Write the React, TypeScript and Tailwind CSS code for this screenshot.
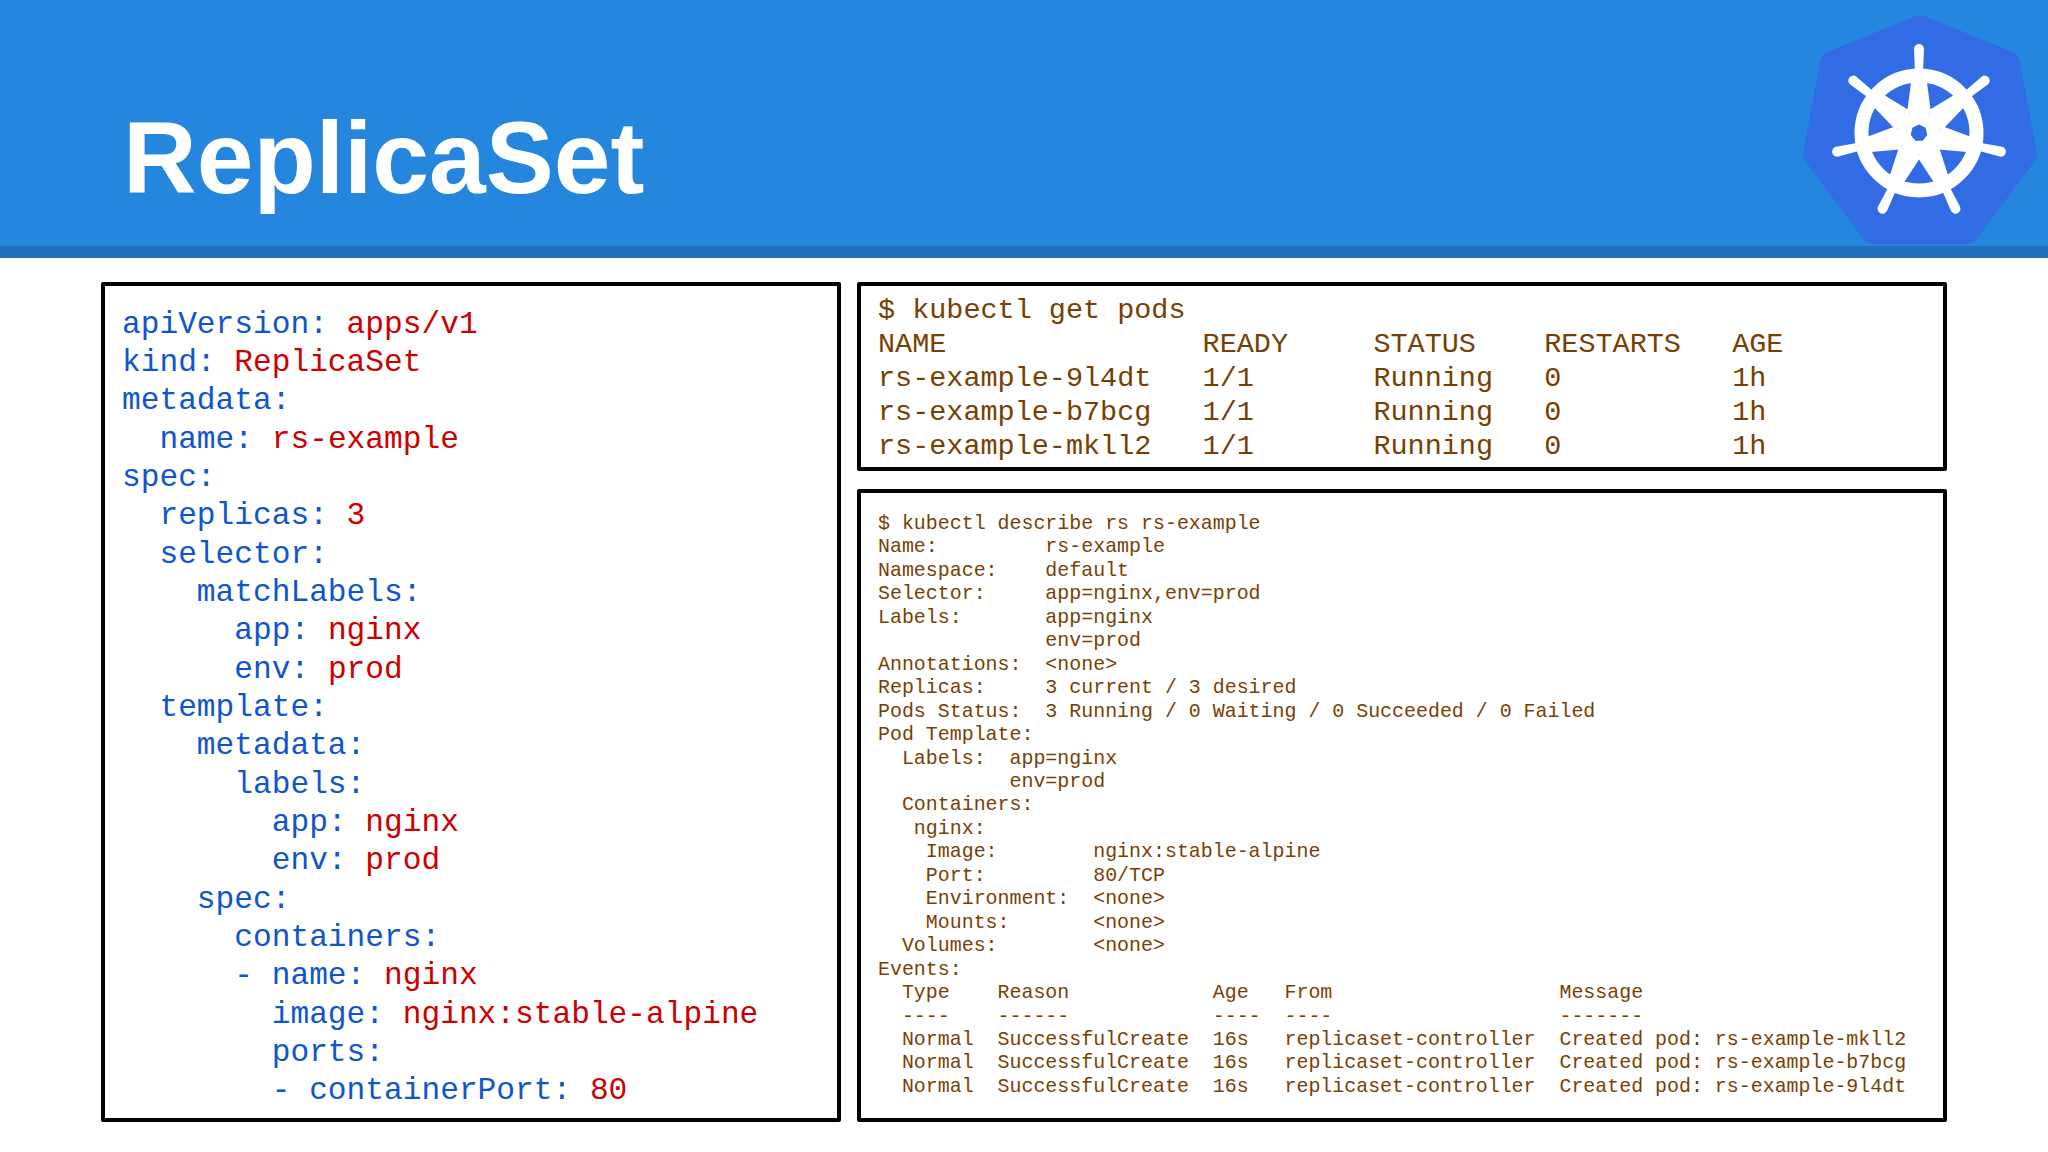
const mono = "font-['Liberation_Mono',monospace]";

type Seg = [string, string?];
const yaml: Seg[] = [
  ["apiVersion: ", "apps/v1"],
  ["kind: ", "ReplicaSet"],
  ["metadata:"],
  ["  name: ", "rs-example"],
  ["spec:"],
  ["  replicas: ", "3"],
  ["  selector:"],
  ["    matchLabels:"],
  ["      app: ", "nginx"],
  ["      env: ", "prod"],
  ["  template:"],
  ["    metadata:"],
  ["      labels:"],
  ["        app: ", "nginx"],
  ["        env: ", "prod"],
  ["    spec:"],
  ["      containers:"],
  ["      - name: ", "nginx"],
  ["        image: ", "nginx:stable-alpine"],
  ["        ports:"],
  ["        - containerPort: ", "80"],
];

const pods = `$ kubectl get pods
NAME               READY     STATUS    RESTARTS   AGE
rs-example-9l4dt   1/1       Running   0          1h
rs-example-b7bcg   1/1       Running   0          1h
rs-example-mkll2   1/1       Running   0          1h`;

const describe = `$ kubectl describe rs rs-example
Name:         rs-example
Namespace:    default
Selector:     app=nginx,env=prod
Labels:       app=nginx
              env=prod
Annotations:  <none>
Replicas:     3 current / 3 desired
Pods Status:  3 Running / 0 Waiting / 0 Succeeded / 0 Failed
Pod Template:
  Labels:  app=nginx
           env=prod
  Containers:
   nginx:
    Image:        nginx:stable-alpine
    Port:         80/TCP
    Environment:  <none>
    Mounts:       <none>
  Volumes:        <none>
Events:
  Type    Reason            Age   From                   Message
  ----    ------            ----  ----                   -------
  Normal  SuccessfulCreate  16s   replicaset-controller  Created pod: rs-example-mkll2
  Normal  SuccessfulCreate  16s   replicaset-controller  Created pod: rs-example-b7bcg
  Normal  SuccessfulCreate  16s   replicaset-controller  Created pod: rs-example-9l4dt`;

function Logo() {
  const angles = [0, 1, 2, 3, 4, 5, 6].map((i) => (i * 360) / 7);
  return (
    <svg width="240" height="236" viewBox="0 0 240 236" className="absolute left-[1800px] top-[10px]">
      <path
        d="M120 17 L208 53 L225 144 L167 222 L73 222 L15 144 L32 53 Z"
        fill="#326ce5"
        stroke="#326ce5"
        strokeWidth="24"
        strokeLinejoin="round"
      />
      <g transform="translate(119 123)">
        <circle r="57.5" fill="none" stroke="#fff" strokeWidth="14" />
        {angles.map((a) => (
          <g key={a} transform={`rotate(${a})`}>
            <path d="M-7.5 -54 L7.5 -54 L12 -20 L-12 -20 Z" fill="#fff" />
            <path d="M-4 -60 L-5 -84 A5 5 0 0 1 5 -84 L4 -60 Z" fill="#fff" />
          </g>
        ))}
        <circle r="22" fill="#fff" />
        <path d="M0 -8.5 L6.6 -5.3 L8.3 1.9 L3.7 7.7 L-3.7 7.7 L-8.3 1.9 L-6.6 -5.3 Z" fill="#326ce5" />
      </g>
    </svg>
  );
}

export default function App() {
  return (
    <div className="relative w-[2048px] h-[1152px] bg-white overflow-hidden">
      <header className="h-[258px] bg-[#2486dc] border-b-[12px] border-[#2170bd] pl-[123px] pt-[91px]">
        <h1 className="font-['Liberation_Sans',sans-serif] font-bold text-[102px] leading-[135px] text-white">ReplicaSet</h1>
      </header>
      <Logo />
      <main className="flex gap-4 pl-[101px] pt-6">
        <section className={`w-[740px] h-[840px] border-4 border-black rounded-[2px] pl-[17px] pt-[19.5px] ${mono} text-[31.2px] leading-[38.35px] whitespace-pre text-[#1155cc]`}>
          {yaml.map(([k, v], i) => (
            <div key={i}>
              {k}
              {v && <span className="text-[#cc0000]">{v}</span>}
            </div>
          ))}
        </section>
        <div className="flex flex-col gap-[18px] w-[1090px]">
          <pre className={`h-[189px] border-4 border-black rounded-[2px] pl-[17px] pt-[8px] ${mono} text-[28.47px] leading-[34px] text-[#783f04]`}>{pods}</pre>
          <pre className={`h-[633px] border-4 border-black rounded-[2px] pl-[17px] pt-[19px] ${mono} text-[19.93px] leading-[23.45px] text-[#783f04]`}>{describe}</pre>
        </div>
      </main>
    </div>
  );
}
